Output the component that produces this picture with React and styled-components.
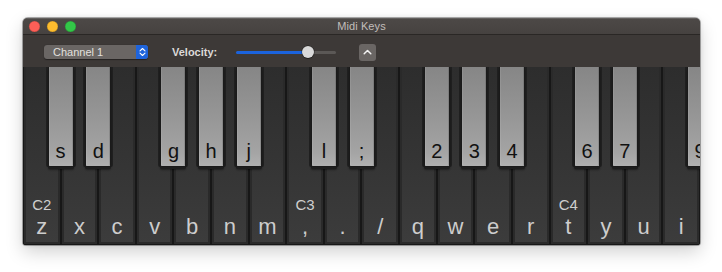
import React from "react";
import styled, { createGlobalStyle } from "styled-components";

const Global = createGlobalStyle`
  html, body { margin: 0; padding: 0; background: #ffffff; }
  body { font-family: "Liberation Sans", Arial, sans-serif; }
`;

const Stage = styled.div`
  width: 722px;
  height: 272px;
  padding: 18px 0 0 23px;
  box-sizing: border-box;
`;

const Window = styled.div`
  width: 677px;
  height: 227px;
  display: flex;
  flex-direction: column;
  border-radius: 5px 5px 3px 3px;
  overflow: hidden;
  background: #3d3a38;
  box-shadow: 0 0 0 1px rgba(0, 0, 0, 0.3), 0 7px 18px rgba(0, 0, 0, 0.18),
    0 0 5px rgba(0, 0, 0, 0.1);
`;

const TitleBar = styled.div`
  height: 16px;
  flex: none;
  position: relative;
  display: flex;
  align-items: center;
  justify-content: center;
  background: linear-gradient(#4d4947, #464240);
  border-bottom: 1px solid #2a2725;
  box-shadow: inset 0 1px 0 rgba(255, 255, 255, 0.12);
`;

const Lights = styled.div`
  position: absolute;
  left: 6px;
  top: 3px;
  display: flex;
  gap: 7px;
`;

const Light = styled.span`
  width: 11px;
  height: 11px;
  border-radius: 50%;
  background: ${(p) => p.$c};
  box-shadow: inset 0 0 0 0.5px rgba(0, 0, 0, 0.2);
`;

const Title = styled.span`
  font-size: 11px;
  color: #c2bebb;
  letter-spacing: 0.1px;
`;

const Toolbar = styled.div`
  height: 32px;
  flex: none;
  display: flex;
  align-items: center;
  padding-left: 21px;
  background: #3d3937;
`;

const Popup = styled.div`
  width: 104px;
  height: 14px;
  margin-top: 1px;
  display: flex;
  border-radius: 3px;
  overflow: hidden;
  background: #6a6664;
  box-shadow: 0 0.5px 1px rgba(0, 0, 0, 0.4);
`;

const PopupText = styled.span`
  flex: 1;
  font-size: 11px;
  line-height: 14px;
  color: #e2e0de;
  padding-left: 9px;
`;

const Stepper = styled.span`
  width: 12px;
  background: #1e64dc;
  display: flex;
  align-items: center;
  justify-content: center;
`;

const Label = styled.span`
  margin-left: 24px;
  font-size: 11px;
  font-weight: bold;
  color: #dcdad8;
  margin-top: 1px;
`;

const Slider = styled.div`
  width: 100px;
  height: 14px;
  margin-left: 19px;
  margin-top: 2px;
  position: relative;
  display: flex;
  align-items: center;
`;

const Track = styled.div`
  width: 100%;
  height: 3px;
  border-radius: 2px;
  background: linear-gradient(
    to right,
    #1b63dd 0,
    #1b63dd ${(p) => p.$v}%,
    #5b5856 ${(p) => p.$v}%,
    #5b5856 100%
  );
`;

const Knob = styled.div`
  position: absolute;
  top: 1px;
  width: 12px;
  height: 12px;
  border-radius: 50%;
  background: #d9d9d9;
  box-shadow: 0 0 0 0.5px rgba(0, 0, 0, 0.5), 0 1px 1px rgba(0, 0, 0, 0.3);
`;

const SmallButton = styled.div`
  width: 17px;
  height: 17px;
  margin-left: 23px;
  margin-top: 2px;
  border-radius: 3px;
  background: #6a6664;
  display: flex;
  align-items: center;
  justify-content: center;
`;

const Keyboard = styled.div`
  flex: 1;
  position: relative;
  display: flex;
  overflow: hidden;
  background: #161616;
`;

const WhiteKey = styled.div`
  flex: 1;
  box-sizing: border-box;
  display: flex;
  flex-direction: column;
  justify-content: flex-end;
  align-items: center;
  padding-bottom: 5px;
  border: 1px solid #171717;
  border-top: none;
  background: linear-gradient(#2d2d2d 0%, #343434 50%, #3c3c3c 100%);
  box-shadow: inset 2px 0 0 #2a2a2a, inset -2px 0 0 #2a2a2a,
    inset 0 -2px 0 #2a2a2a;
`;

const Octave = styled.span`
  font-size: 15px;
  line-height: 17px;
  color: #cfcfcf;
  margin-bottom: 2px;
`;

const WhiteLabel = styled.span`
  font-size: 22px;
  line-height: 24px;
  color: #cdcdcd;
`;

const BlackKey = styled.div`
  position: absolute;
  top: 0;
  width: 26px;
  height: 100px;
  margin-left: -13px;
  box-sizing: border-box;
  border: 1px solid #1a1a1a;
  border-top: none;
  border-radius: 0 0 2px 2px;
  display: flex;
  align-items: flex-end;
  justify-content: center;
  padding-bottom: 4px;
  background: linear-gradient(
    #868686 0%,
    #969696 50%,
    #a4a4a4 86%,
    #b0b0b0 100%
  );
  box-shadow: inset 1px 0 0 rgba(255, 255, 255, 0.08),
    inset -1px 0 0 rgba(0, 0, 0, 0.12), 0 2px 0 #1e1e1e,
    0 3px 2px rgba(0, 0, 0, 0.4), 2px 0 0 #202020, -2px 0 0 #202020;
`;

const BlackLabel = styled.span`
  font-size: 20px;
  line-height: 22px;
  color: #111111;
`;

const whites = [
  { k: "z", o: "C2" },
  { k: "x" },
  { k: "c" },
  { k: "v" },
  { k: "b" },
  { k: "n" },
  { k: "m" },
  { k: ",", o: "C3" },
  { k: "." },
  { k: "/" },
  { k: "q" },
  { k: "w" },
  { k: "e" },
  { k: "r" },
  { k: "t", o: "C4" },
  { k: "y" },
  { k: "u" },
  { k: "i" },
];

const blacks = [
  { k: "s", at: 1 },
  { k: "d", at: 2 },
  { k: "g", at: 4 },
  { k: "h", at: 5 },
  { k: "j", at: 6 },
  { k: "l", at: 8 },
  { k: ";", at: 9 },
  { k: "2", at: 11 },
  { k: "3", at: 12 },
  { k: "4", at: 13 },
  { k: "6", at: 15 },
  { k: "7", at: 16 },
  { k: "9", at: 18 },
];

export default function App() {
  const velocity = 72;
  return (
    <>
      <Global />
      <Stage>
        <Window>
          <TitleBar>
            <Lights>
              <Light $c="#fc5f57" />
              <Light $c="#fdbc2e" />
              <Light $c="#33c748" />
            </Lights>
            <Title>Midi Keys</Title>
          </TitleBar>
          <Toolbar>
            <Popup>
              <PopupText>Channel 1</PopupText>
              <Stepper>
                <svg width="7" height="10" viewBox="0 0 7 10">
                  <path
                    d="M1 3.8 L3.5 1.5 L6 3.8 M1 6.2 L3.5 8.5 L6 6.2"
                    fill="none"
                    stroke="#fff"
                    strokeWidth="1.1"
                    strokeLinecap="round"
                    strokeLinejoin="round"
                  />
                </svg>
              </Stepper>
            </Popup>
            <Label>Velocity:</Label>
            <Slider>
              <Track $v={velocity} />
              <Knob style={{ left: `calc(${velocity}% - 6px)` }} />
            </Slider>
            <SmallButton>
              <svg width="9" height="6" viewBox="0 0 9 6">
                <path
                  d="M1.2 4.8 L4.5 1.5 L7.8 4.8"
                  fill="none"
                  stroke="#f2f2f2"
                  strokeWidth="1.5"
                  strokeLinecap="round"
                  strokeLinejoin="round"
                />
              </svg>
            </SmallButton>
          </Toolbar>
          <Keyboard>
            {whites.map((w) => (
              <WhiteKey key={w.k}>
                {w.o && <Octave>{w.o}</Octave>}
                <WhiteLabel>{w.k}</WhiteLabel>
              </WhiteKey>
            ))}
            {blacks.map((b) => (
              <BlackKey key={b.k} style={{ left: `${(b.at * 100) / 18}%` }}>
                <BlackLabel>{b.k}</BlackLabel>
              </BlackKey>
            ))}
          </Keyboard>
        </Window>
      </Stage>
    </>
  );
}
